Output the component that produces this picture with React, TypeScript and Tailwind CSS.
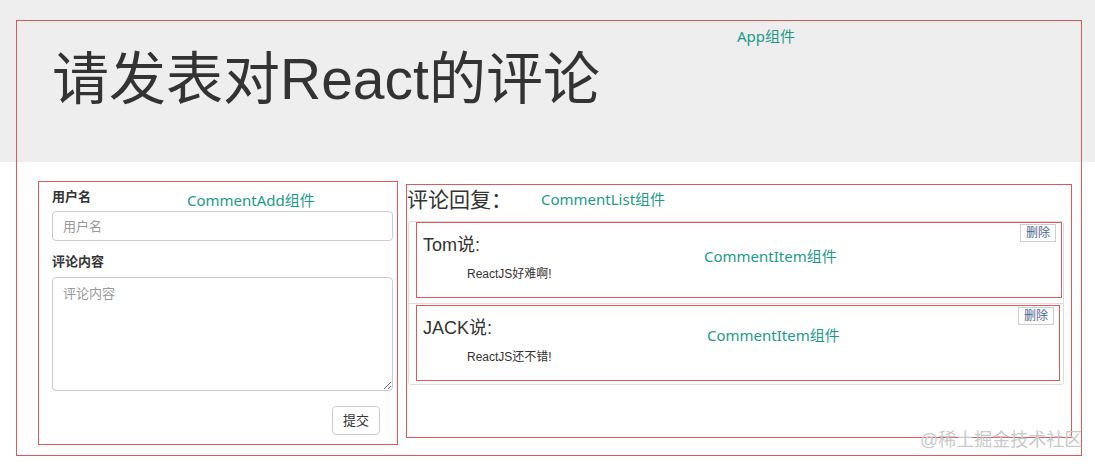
import { ReactNode } from "react";

const font = "font-['Liberation_Sans','Noto_Sans_CJK_SC',sans-serif]";
const tealFont = "font-['Noto_Sans','Noto_Sans_CJK_SC',sans-serif]";

function Tag({ text, className }: { text: string; className: string }): ReactNode {
  return (
    <span className={`absolute whitespace-nowrap text-[15px] leading-[20px] text-[#1b9a8a] ${tealFont} ${className}`}>
      {text}
    </span>
  );
}

function CommentItem({ name, content, tagClass }: { name: string; content: string; tagClass: string }): ReactNode {
  return (
    <div className="relative h-[76px] border border-[#dc5a5a] pl-[6px] pt-[12px]">
      <button className="absolute top-[1px] right-[5px] h-[18px] w-[36px] border border-[#cfcfcf] bg-white text-[12px] leading-[16px] text-[#4d6590]">
        删除
      </button>
      <Tag text="CommentItem组件" className={tagClass} />
      <h4 className="text-[18px] leading-[20px] text-[#333]">{name}说:</h4>
      <p className="mt-[11px] pl-[44px] text-[12px] leading-[16px] text-[#333]">{content}</p>
    </div>
  );
}

function CommentAdd(): ReactNode {
  return (
    <div className="relative mt-[19px] h-[264px] w-[360px] shrink-0 border border-[#dc5a5a] pl-[13px] pr-[4px] pt-[6px]">
      <Tag text="CommentAdd组件" className="left-[148px] top-[8px]" />
      <label className="block text-[13px] font-bold leading-[18px] text-[#333]">用户名</label>
      <input
        className="mt-[5px] block h-[30px] w-full rounded-[4px] border border-[#ccc] px-[10px] text-[13px] text-[#555] outline-none placeholder:text-[#999]"
        placeholder="用户名"
      />
      <label className="mt-[12px] block text-[13px] font-bold leading-[18px] text-[#333]">评论内容</label>
      <textarea
        className="mt-[6px] block h-[114px] w-full rounded-[4px] border border-[#ccc] px-[10px] py-[6px] text-[13px] text-[#555] outline-none placeholder:text-[#999]"
        placeholder="评论内容"
      />
      <div className="mt-[15px] flex justify-end pr-[13px]">
        <button className="h-[29px] w-[48px] rounded-[4px] border border-[#ccc] bg-white text-[13px] text-[#333]">
          提交
        </button>
      </div>
    </div>
  );
}

function CommentList(): ReactNode {
  return (
    <div className="relative ml-[8px] mt-[22px] h-[254px] w-[666px] shrink-0 border border-[#dc5a5a]">
      <Tag text="CommentList组件" className="left-[134px] top-[4px]" />
      <h3 className="pt-[3px] text-[21px] leading-[24px] text-[#333]">评论回复：</h3>
      <ul className="ml-[1px] mt-[9px] w-[656px] rounded-[3px] border border-[#ddd]">
        <li className="border-b border-[#ddd] pb-[5px] pl-[7px] pr-[1px]">
          <CommentItem name="Tom" content="ReactJS好难啊!" tagClass="left-[287px] top-[23px]" />
        </li>
        <li className="pb-[3px] pl-[7px] pr-[3px] pt-[1px]">
          <CommentItem name="JACK" content="ReactJS还不错!" tagClass="left-[290px] top-[19px]" />
        </li>
      </ul>
    </div>
  );
}

export default function App(): ReactNode {
  return (
    <div className={`relative h-[467px] w-full overflow-hidden bg-[linear-gradient(#eeeeee_0,#eeeeee_162px,#ffffff_162px)] pt-[20px] pl-[16px] ${font}`}>
      <div className="relative h-[436px] w-[1066px] border border-[#dc5a5a]">
        <Tag text="App组件" className="left-[720px] top-[5px]" />
        <div className="h-[141px] pl-[35px] pt-[27px]">
          <h1 className="text-[57px] font-normal leading-[62px] text-[#333]">请发表对React的评论</h1>
        </div>
        <div className="flex items-start pl-[21px]">
          <CommentAdd />
          <CommentList />
        </div>
      </div>
      <span className="absolute left-[920px] top-[430px] text-[18px] leading-[20px] text-[#c9c9c9]">@稀土掘金技术社区</span>
    </div>
  );
}
